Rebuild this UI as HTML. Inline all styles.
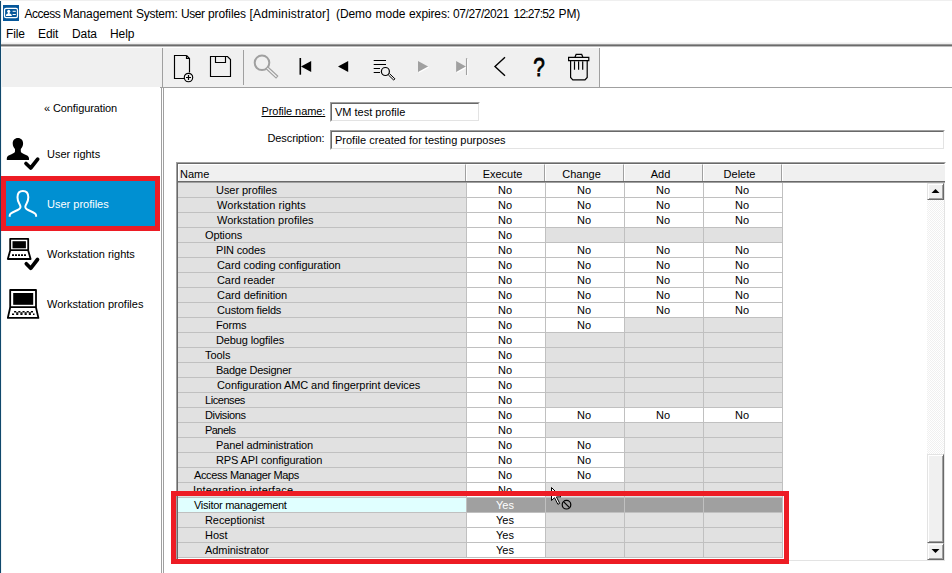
<!DOCTYPE html>
<html><head><meta charset="utf-8"><title>Access Management System</title>
<style>
*{box-sizing:border-box;margin:0;padding:0}
html,body{width:952px;height:573px;overflow:hidden;background:#fff}
body{position:relative;font-family:"Liberation Sans",sans-serif;font-size:11px;color:#000}
.abs{position:absolute}
#lb{left:0;top:1px;width:1px;height:573px;background:#10486c}
#title{left:0;top:6px;font-size:12px;line-height:16px;white-space:pre}
#title span{position:absolute;top:0}
.menu{top:26px;font-size:12px;line-height:16px;letter-spacing:-0.1px}
#hl{left:1px;top:42px;width:951px;height:6px;background:linear-gradient(#f7f7f7 0 1px,#efefef 1px 2px,#9a9a9a 2px 3px,#6b6b6b 3px 4px,#bdbdbd 4px 5px,#fff 5px 6px)}
#band{left:2px;top:48px;width:597px;height:39px;background:#f0f0f0}
#vl1{left:162px;top:48px;width:1px;height:40px;background:#a0a0a0}
#vl2{left:599px;top:48px;width:1px;height:40px;background:#a0a0a0}
#hl2{left:160px;top:87px;width:792px;height:1px;background:#a0a0a0}
#sp1{left:161px;top:88px;width:1px;height:485px;background:#a0a0a0}
#sp2{left:163px;top:88px;width:1px;height:485px;background:#a0a0a0}
#sep{left:243px;top:50px;width:1px;height:35px;background:#a0a0a0}
.sb{left:47px;font-size:11px;line-height:14px;white-space:pre}
#selitem{left:1px;top:176px;width:159px;height:55px;background:#0090d2;border:5px solid #ed1c24}
.lab{font-size:11px;line-height:14px;white-space:pre}
.inp{height:20px;border-top:1px solid #a0a0a0;border-left:1px solid #a0a0a0;border-bottom:1px solid #fff;border-right:1px solid #fff;background:#fff}
.inp>span{display:block;height:18px;border-top:1px solid #696969;border-left:1px solid #696969;border-bottom:1px solid #e3e3e3;border-right:1px solid #e3e3e3;padding-left:3px;line-height:17px;font-size:11px;white-space:pre;overflow:hidden}
#grid{left:176px;top:162px;width:770px;height:400px;border-top:1px solid #a0a0a0;border-left:1px solid #a0a0a0;border-bottom:1px solid #fff;border-right:1px solid #fff}
#grid2{left:177px;top:163px;width:768px;height:398px;border-top:1px solid #696969;border-left:1px solid #696969;border-bottom:1px solid #e3e3e3;border-right:1px solid #e3e3e3}
.h{top:164px;height:17px;background:#f0f0f0;border-top:1px solid #fff;border-left:1px solid #fff;border-right:1px solid #a0a0a0;font-size:11px;line-height:19px;text-align:center;padding-right:6px;overflow:hidden}
#hb{left:178px;top:181px;width:767px;height:2px;background:linear-gradient(#696969 50%,#a0a0a0 50%)}
.r{position:absolute;left:178px;width:605px;height:15px}
.r>span{position:absolute;top:0;height:15px;line-height:14px;font-size:11px;border-bottom:1px solid #c0c0c0;border-right:1px solid #c0c0c0;white-space:pre}
.n{left:0;width:289px;background:#e1e1e1}
.c{width:79px;text-align:center;background:#fff;padding-right:2px}
.c0{left:289px}.c1{left:368px}.c2{left:447px}.c3{left:526px}
.e{background:#e1e1e1 !important}
.sel .n{background:#e0ffff}
.sel .c{background:#a0a0a0 !important;color:#fff}
#sbar{left:927px;top:183px;width:17px;height:377px;background:conic-gradient(#fff 25%,#f0f0f0 0 50%,#fff 0 75%,#f0f0f0 0) 0 0/2px 2px}
.btn{left:927px;width:17px;background:#f0f0f0;border-top:1px solid #e3e3e3;border-left:1px solid #e3e3e3;border-right:1px solid #696969;border-bottom:1px solid #696969;box-shadow:inset 1px 1px 0 #fff,inset -1px -1px 0 #a0a0a0}
#red2{left:171px;top:491px;width:618px;height:73px;border:5px solid #ed1c24}
svg{position:absolute;overflow:visible}
</style></head><body>
<div class="abs" style="left:0;top:0;width:952px;height:1px;background:#efefef"></div><div id="lb" class="abs"></div><div class="abs" style="left:1px;top:1px;width:1px;height:572px;background:#eef3f6"></div>
<svg style="left:3px;top:5px" width="16" height="16" viewBox="0 0 16 16"><rect width="16" height="16" fill="#05579a"/><rect x="1.500" y="3.300" width="13" height="9.400" rx="1.600" fill="none" stroke="#fff" stroke-width="1.250"/><rect x="5" y="7" width="1.500" height="2.500" fill="#fff"/><circle cx="5.700" cy="6.300" r="1.550" fill="#fff"/><path d="M2.900 11.100c0-1.900 1.100-2.500 2.800-2.500s3 .6 3.200 2.500z" fill="#fff"/><rect x="9.600" y="5.800" width="3.200" height="1" fill="#fff"/><rect x="9.600" y="9" width="3.200" height="1" fill="#fff"/></svg>
<div id="title" class="abs"><span style="left:24.5px;letter-spacing:-0.50px">Access </span><span style="left:63.0px;letter-spacing:-0.08px">Management </span><span style="left:136.0px;letter-spacing:-0.27px">System: </span><span style="left:181.0px;letter-spacing:-0.42px">User </span><span style="left:208.0px;letter-spacing:-0.08px">profiles </span><span style="left:249.5px;letter-spacing:0.19px">[Administrator]  </span><span style="left:336.0px;letter-spacing:-0.09px">(Demo </span><span style="left:375.5px;letter-spacing:0.00px">mode </span><span style="left:409.0px;letter-spacing:-0.13px">expires: </span><span style="left:453.0px;letter-spacing:-0.42px">07/27/2021 </span><span style="left:513.5px;letter-spacing:-0.77px">12:27:52 </span><span style="left:558.5px;letter-spacing:-0.09px">PM)</span></div>
<div class="abs menu" style="left:6px">File</div>
<div class="abs menu" style="left:38px">Edit</div>
<div class="abs menu" style="left:72px">Data</div>
<div class="abs menu" style="left:110px">Help</div>
<div id="hl" class="abs"></div>
<div id="band" class="abs"></div>
<div id="vl1" class="abs"></div><div id="vl2" class="abs"></div><div id="hl2" class="abs"></div>
<div id="sp1" class="abs"></div><div id="sp2" class="abs"></div>
<div id="sep" class="abs"></div>

<!-- toolbar icons -->
<svg style="left:0;top:0" width="952" height="100" viewBox="0 0 952 100" fill="none" stroke="#000" stroke-width="1.15">
<!-- new -->
<path d="M186.500 55.500h-12v23h9.500M186.500 55.500l3 3v14M186.500 55.500v3h3"/>
<circle cx="188.5" cy="77.5" r="4.2" fill="#f0f0f0"/><path d="M186 77.5h5M188.500 75v5" stroke-width="1.2"/>
<!-- save -->
<path d="M210.500 56.500h17l3 3v17h-20zM215.500 56.500v6h10v-6"/>
<!-- magnifier -->
<g stroke="#a0a0a0"><circle cx="262" cy="62.800" r="7.300" stroke-width="2"/><path d="M267.300 68.100l10 9.300" stroke-width="3.600"/><path d="M267.300 68.100l9.200 8.600" stroke="#f4f4f4" stroke-width="1.300"/></g>
<!-- first -->
<path d="M300.300 58v16.700" stroke-width="1.600"/><path d="M301 66.500l10.200-5.500v11z" fill="#000" stroke="none"/>
<!-- prev -->
<path d="M338 66.500l10.200-5.500v11z" fill="#000" stroke="none"/>
<!-- find list -->
<path d="M373.700 60.500h12.300M373.700 64.500h12.300M373.700 68.500h6.300M373.700 72.500h6.300" stroke-width="1.100"/>
<circle cx="385.400" cy="71.500" r="4" stroke-width="1.200"/><path d="M388.300 74.900l5.400 5.200 1.200-1.300-5.400-5.200" stroke-width="1"/>
<!-- next -->
<path d="M429.100 67.500l-10.100-5.500v11z" fill="#fff" stroke="none"/><path d="M428.100 66.500l-10.100-5.500v11z" fill="#a0a0a0" stroke="none"/>
<!-- last -->
<path d="M466.900 67.500l-9.800-5.500v11z" fill="#fff" stroke="none"/><path d="M465.900 66.500l-9.800-5.500v11z" fill="#a0a0a0" stroke="none"/><path d="M466.600 58.200v16.800" stroke="#a0a0a0" stroke-width="1.300"/><path d="M467.700 59v16.500" stroke="#fff" stroke-width="1"/>
<!-- back -->
<path d="M505 57.200l-10 9.200 10 9.300" stroke-width="1.400"/>
<!-- trash -->
<path d="M568.600 57.400h20.200v3.200h-20.200zM574.800 57.400l1.300-3h5.600l1.300 3M570.600 60.600v16.800l2.200 2.400h12.200l2.200-2.400v-16.800M574.500 61.500v8.300M578.600 61.500v8.300M582.700 61.500v8.300" stroke-width="1.200"/>
</svg>
<div class="abs" style="left:531.300px;top:51.500px;width:16px;text-align:center;font-size:26px;line-height:30px;-webkit-text-stroke:0.8px #000;transform:scaleX(0.8)">?</div>

<!-- sidebar -->
<div class="abs sb" style="left:44px;top:101px;letter-spacing:-0.1px">« Configuration</div>
<div id="selitem" class="abs"></div>
<div class="abs sb" style="top:147px">User rights</div>
<div class="abs sb" style="top:197px;color:#fff">User profiles</div>
<div class="abs sb" style="top:247px">Workstation rights</div>
<div class="abs sb" style="top:297px">Workstation profiles</div>
<svg style="left:0;top:0" width="60" height="340" viewBox="0 0 60 340">
<!-- user rights -->
<path d="M17.900 138c3.200 0 5.200 2.300 5.200 5.400 0 2.600-1.200 4.400-2.300 5.600v2.300c0 1.200 1 1.800 3 2.600 3.300 1.300 5.200 2.200 5.200 4.300v1.700h-22.200v-1.700c0-2.100 1.900-3 5.200-4.300 2-.8 3-1.400 3-2.600v-2.300c-1.100-1.200-2.300-3-2.300-5.600 0-3.100 2-5.400 5.200-5.400z" fill="#000"/>
<path d="M26 163.500l4.700 4.500 7-8.800" fill="none" stroke="#000" stroke-width="3.700" stroke-linecap="round" stroke-linejoin="round"/>
<!-- user profiles -->
<path d="M9.700 216.800v-1.200c0-2 1.700-2.900 5.300-4.300 3.300-1.300 5.500-2.600 5.500-4.200 0-1.600-.3-1.800-1.400-3.800-1-1.800-1.600-3.900-1.600-6 0-3.700 2-6.300 5.400-6.300s5.400 2.600 5.400 6.300c0 2.100-.6 4.200-1.600 6-1.100 2-1.400 2.200-1.400 3.800 0 1.600 2.200 2.900 5.500 4.200 3.600 1.400 5.300 2.300 5.300 4.300v1.200" fill="none" stroke="#fff" stroke-width="2"/>
<!-- workstation rights -->
<path d="M10.200 238.800h18v11.300h-18z" fill="none" stroke="#000" stroke-width="1.800" stroke-linejoin="round"/><rect x="12.500" y="241.200" width="13.400" height="7.100" fill="#000"/>
<path d="M10.200 250.500l-2.400 8.500h22.800l-2.400-8.500" fill="none" stroke="#000" stroke-width="1.800" stroke-linejoin="round"/>
<path d="M12 255.100h14" stroke="#000" stroke-width="1.800" stroke-dasharray="2 1"/>
<path d="M26.300 263.800l4.400 4.500 6.800-8.800" fill="none" stroke="#000" stroke-width="3.700" stroke-linecap="round" stroke-linejoin="round"/>
<!-- workstation profiles -->
<path d="M10.200 290h25.800v17.200h-25.800z" fill="none" stroke="#000" stroke-width="1.800" stroke-linejoin="round"/><rect x="13.200" y="293" width="20" height="11.800" fill="#000"/>
<path d="M10.200 307.500l-2.400 10.400h30.600l-2.400-10.400" fill="none" stroke="#000" stroke-width="1.800" stroke-linejoin="round"/>
<path d="M14.100 311.700h19.500" stroke="#000" stroke-width="1.400" stroke-dasharray="2.100 2.100"/><path d="M16.200 313h15.500" stroke="#000" stroke-width="1.300" stroke-dasharray="2.100 2.100"/><path d="M12 314.300h22.500" stroke="#000" stroke-width="1.400" stroke-dasharray="2.100 2.100"/>
</svg>

<!-- form -->
<div class="abs lab" style="left:261.500px;top:104px;text-decoration:underline;letter-spacing:-0.08px">Profile name:</div>
<div class="abs lab" style="left:267.500px;top:131px;letter-spacing:-0.1px">Description:</div>
<div class="abs inp" style="left:330px;top:102px;width:150px"><span>VM test profile</span></div>
<div class="abs inp" style="left:330px;top:130px;width:615px"><span>Profile created for testing purposes</span></div>

<!-- grid -->
<div id="grid" class="abs"></div><div id="grid2" class="abs"></div>
<div class="abs h" style="left:178px;width:288px;text-align:left;padding-left:1px">Name</div>
<div class="abs h" style="left:466px;width:79px">Execute</div>
<div class="abs h" style="left:545px;width:79px">Change</div>
<div class="abs h" style="left:624px;width:79px">Add</div>
<div class="abs h" style="left:703px;width:79px">Delete</div>
<div class="abs h" style="left:782px;width:163px;border-right:none"></div>
<div id="hb" class="abs"></div>
<div class="r" style="top:183px"><span class="n" style="padding-left:38px;letter-spacing:-0.06px">User profiles</span> <span class="c c0">No</span> <span class="c c1">No</span> <span class="c c2">No</span> <span class="c c3">No</span></div>
<div class="r" style="top:198px"><span class="n" style="padding-left:39px;letter-spacing:0.05px">Workstation rights</span> <span class="c c0">No</span> <span class="c c1">No</span> <span class="c c2">No</span> <span class="c c3">No</span></div>
<div class="r" style="top:213px"><span class="n" style="padding-left:39px;letter-spacing:0.01px">Workstation profiles</span> <span class="c c0">No</span> <span class="c c1">No</span> <span class="c c2">No</span> <span class="c c3">No</span></div>
<div class="r" style="top:228px"><span class="n" style="padding-left:27px;letter-spacing:-0.12px">Options</span> <span class="c c0">No</span> <span class="c c1 e"></span> <span class="c c2 e"></span> <span class="c c3 e"></span></div>
<div class="r" style="top:243px"><span class="n" style="padding-left:38px;letter-spacing:-0.16px">PIN codes</span> <span class="c c0">No</span> <span class="c c1">No</span> <span class="c c2">No</span> <span class="c c3">No</span></div>
<div class="r" style="top:258px"><span class="n" style="padding-left:39px;letter-spacing:-0.07px">Card coding configuration</span> <span class="c c0">No</span> <span class="c c1">No</span> <span class="c c2">No</span> <span class="c c3">No</span></div>
<div class="r" style="top:273px"><span class="n" style="padding-left:39px;letter-spacing:-0.07px">Card reader</span> <span class="c c0">No</span> <span class="c c1">No</span> <span class="c c2">No</span> <span class="c c3">No</span></div>
<div class="r" style="top:288px"><span class="n" style="padding-left:39px;letter-spacing:-0.05px">Card definition</span> <span class="c c0">No</span> <span class="c c1">No</span> <span class="c c2">No</span> <span class="c c3">No</span></div>
<div class="r" style="top:303px"><span class="n" style="padding-left:39px;letter-spacing:-0.19px">Custom fields</span> <span class="c c0">No</span> <span class="c c1">No</span> <span class="c c2">No</span> <span class="c c3">No</span></div>
<div class="r" style="top:318px"><span class="n" style="padding-left:38px;letter-spacing:-0.18px">Forms</span> <span class="c c0">No</span> <span class="c c1">No</span> <span class="c c2 e"></span> <span class="c c3 e"></span></div>
<div class="r" style="top:333px"><span class="n" style="padding-left:38px;letter-spacing:-0.12px">Debug logfiles</span> <span class="c c0">No</span> <span class="c c1 e"></span> <span class="c c2 e"></span> <span class="c c3 e"></span></div>
<div class="r" style="top:348px"><span class="n" style="padding-left:27px;letter-spacing:-0.04px">Tools</span> <span class="c c0">No</span> <span class="c c1 e"></span> <span class="c c2 e"></span> <span class="c c3 e"></span></div>
<div class="r" style="top:363px"><span class="n" style="padding-left:38px;letter-spacing:-0.24px">Badge Designer</span> <span class="c c0">No</span> <span class="c c1 e"></span> <span class="c c2 e"></span> <span class="c c3 e"></span></div>
<div class="r" style="top:378px"><span class="n" style="padding-left:39px;letter-spacing:-0.07px">Configuration AMC and fingerprint devices</span> <span class="c c0">No</span> <span class="c c1 e"></span> <span class="c c2 e"></span> <span class="c c3 e"></span></div>
<div class="r" style="top:393px"><span class="n" style="padding-left:27px;letter-spacing:-0.44px">Licenses</span> <span class="c c0">No</span> <span class="c c1 e"></span> <span class="c c2 e"></span> <span class="c c3 e"></span></div>
<div class="r" style="top:408px"><span class="n" style="padding-left:27px;letter-spacing:-0.38px">Divisions</span> <span class="c c0">No</span> <span class="c c1">No</span> <span class="c c2">No</span> <span class="c c3">No</span></div>
<div class="r" style="top:423px"><span class="n" style="padding-left:27px;letter-spacing:-0.54px">Panels</span> <span class="c c0">No</span> <span class="c c1 e"></span> <span class="c c2 e"></span> <span class="c c3 e"></span></div>
<div class="r" style="top:438px"><span class="n" style="padding-left:38px;letter-spacing:-0.13px">Panel administration</span> <span class="c c0">No</span> <span class="c c1">No</span> <span class="c c2 e"></span> <span class="c c3 e"></span></div>
<div class="r" style="top:453px"><span class="n" style="padding-left:38px;letter-spacing:-0.12px">RPS API configuration</span> <span class="c c0">No</span> <span class="c c1">No</span> <span class="c c2 e"></span> <span class="c c3 e"></span></div>
<div class="r" style="top:468px"><span class="n" style="padding-left:16px;letter-spacing:-0.37px">Access Manager Maps</span> <span class="c c0">No</span> <span class="c c1">No</span> <span class="c c2 e"></span> <span class="c c3 e"></span></div>
<div class="r" style="top:483px"><span class="n" style="padding-left:15px;letter-spacing:0.14px">Integration interface</span> <span class="c c0">No</span> <span class="c c1 e"></span> <span class="c c2 e"></span> <span class="c c3 e"></span></div>
<div class="r sel" style="top:498px"><span class="n" style="padding-left:16px;letter-spacing:-0.28px">Visitor management</span> <span class="c c0">Yes</span> <span class="c c1 e"></span> <span class="c c2 e"></span> <span class="c c3 e"></span></div>
<div class="r" style="top:513px"><span class="n" style="padding-left:27px;letter-spacing:-0.08px">Receptionist</span> <span class="c c0">Yes</span> <span class="c c1 e"></span> <span class="c c2 e"></span> <span class="c c3 e"></span></div>
<div class="r" style="top:528px"><span class="n" style="padding-left:27px;letter-spacing:-0.06px">Host</span> <span class="c c0">Yes</span> <span class="c c1 e"></span> <span class="c c2 e"></span> <span class="c c3 e"></span></div>
<div class="r" style="top:543px"><span class="n" style="padding-left:27px;letter-spacing:-0.07px">Administrator</span> <span class="c c0">Yes</span> <span class="c c1 e"></span> <span class="c c2 e"></span> <span class="c c3 e"></span></div>
<div id="sbar" class="abs"></div>
<div class="abs btn" style="top:183px;height:17px"></div>
<div class="abs btn" style="top:454px;height:89px"></div>
<div class="abs btn" style="top:543px;height:17px"></div>
<svg style="left:0;top:0" width="952" height="573" viewBox="0 0 952 573">
<path d="M931.500 193h8l-4-4z" fill="#000"/><path d="M931.500 549h8l-4 4z" fill="#000"/>
<!-- cursor -->
<path d="M551.500 487.500v13l3-2.800 3.400 6.600 1.800-.9-3.300-6.500h4.500z" fill="#fff" stroke="#000" stroke-width="1"/>
<circle cx="566.500" cy="504.700" r="4.300" fill="none" stroke="#000" stroke-width="1.200"/><path d="M563.500 501.700l6 6" stroke="#000" stroke-width="1.200"/>
</svg>
<div id="red2" class="abs"></div>
</body></html>
